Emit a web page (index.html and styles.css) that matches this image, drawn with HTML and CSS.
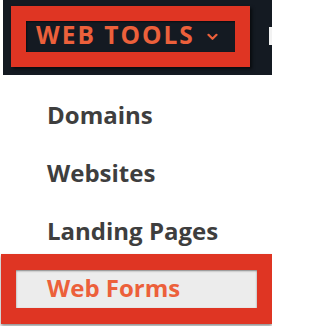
FILE: index.html
```html
<!DOCTYPE html>
<html lang="en">
<head>
<meta charset="utf-8">
<title>Web Tools menu</title>
<link rel="stylesheet" href="styles.css">
</head>
<body>
<header class="topbar">
  <div class="highlight highlight--dark">
    <a class="tools-link"><span class="tools-label">WEB TOOLS</span>
      <svg class="chevron" width="11" height="8" viewBox="0 0 11 8" aria-hidden="true"><polyline points="1.5,1.8 5.5,5.8 9.5,1.8" fill="none" stroke="#ec603b" stroke-width="2.2" stroke-linecap="round" stroke-linejoin="round"/></svg>
    </a>
  </div>
  <span class="next-link" aria-hidden="true"></span>
</header>
<nav class="dropdown">
  <a class="item">Domains</a>
  <a class="item">Websites</a>
  <a class="item">Landing Pages</a>
  <div class="highlight highlight--light">
    <a class="item item--active">Web Forms</a>
  </div>
</nav>
</body>
</html>
```
FILE: styles.css
```css
html, body {
  margin: 0;
  padding: 0;
  background: #ffffff;
  font-family: "Open Sans", "Noto Sans", sans-serif;
  font-weight: 700;
}
body {
  width: 272px;
  height: 326px;
  overflow: hidden;
}
.topbar {
  margin-left: 3px;
  height: 75px;
  background: #141a22;
  display: flex;
  align-items: flex-start;
  padding: 6px 0 0 8px;
  box-sizing: border-box;
  overflow: hidden;
}
.highlight {
  border: 15px solid #df3523;
  box-sizing: border-box;
}
.highlight--dark {
  width: 239px;
  height: 61px;
  background: #141a22;
  box-shadow: 2px 2px 3px rgba(0, 0, 0, 0.6), inset 1px 1px 2px rgba(0, 0, 0, 0.5);
  flex-shrink: 0;
}
.tools-link {
  display: flex;
  align-items: center;
  padding: 0 0 4px 10px;
  font-size: 24.5px;
  line-height: 27px;
  color: #ec603b;
}
.tools-label {
  letter-spacing: 2px;
  white-space: nowrap;
}
.chevron {
  margin-left: 12px;
  margin-top: 4px;
  flex-shrink: 0;
}
.next-link {
  display: block;
  margin-left: 19px;
  margin-top: 21px;
  width: 4px;
  height: 18px;
  background: #f2f2f2;
  flex-shrink: 0;
}
.dropdown {
  display: flex;
  flex-direction: column;
  padding-top: 11px;
}
.item {
  display: block;
  padding-left: 47px;
  font-size: 24px;
  line-height: 58px;
  color: #3e3e3e;
}
.highlight--light {
  margin: -6px 0 0 1px;
  height: 70px;
  border-width: 16px 15px 16px 15px;
  background: #ececec;
  box-shadow: 0 2px 3px rgba(0, 0, 0, 0.45), inset 0 1px 2px rgba(0, 0, 0, 0.45);
}
.item--active {
  padding: 0 0 2px 31px;
  line-height: 36px;
  color: #ec603b;
}
```
